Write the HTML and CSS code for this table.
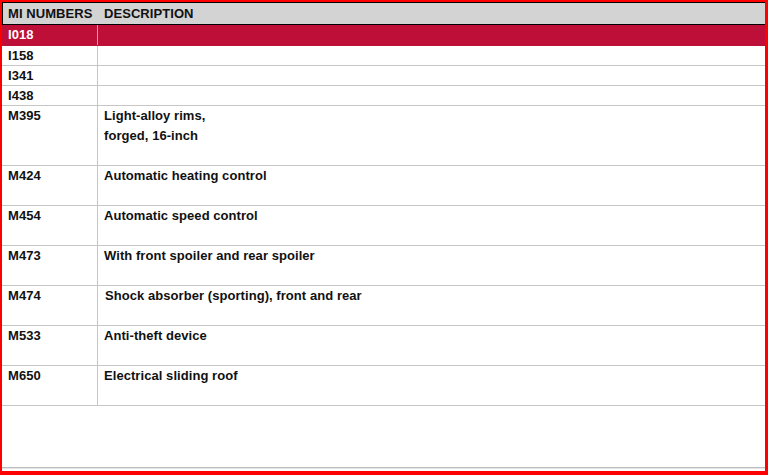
FILE: index.html
```html
<!DOCTYPE html>
<html>
<head>
<meta charset="utf-8">
<link rel="stylesheet" href="styles.css">
</head>
<body>
<div class="frame">
  <div class="head">
    <div class="hcell code">MI NUMBERS</div>
    <div class="hcell desc">DESCRIPTION</div>
  </div>
  <div class="rows">
    <div class="row h21 selected"><div class="cell code">I018</div><div class="cell desc"></div></div>
    <div class="row h20"><div class="cell code">I158</div><div class="cell desc"></div></div>
    <div class="row h20"><div class="cell code">I341</div><div class="cell desc"></div></div>
    <div class="row h20"><div class="cell code">I438</div><div class="cell desc"></div></div>
    <div class="row h60"><div class="cell code">M395</div><div class="cell desc">Light-alloy rims,<br>forged, 16-inch</div></div>
    <div class="row h40"><div class="cell code">M424</div><div class="cell desc">Automatic heating control</div></div>
    <div class="row h40"><div class="cell code">M454</div><div class="cell desc">Automatic speed control</div></div>
    <div class="row h40"><div class="cell code">M473</div><div class="cell desc">With front spoiler and rear spoiler</div></div>
    <div class="row h40"><div class="cell code">M474</div><div class="cell desc shift">Shock absorber (sporting), front and rear</div></div>
    <div class="row h40"><div class="cell code">M533</div><div class="cell desc">Anti-theft device</div></div>
    <div class="row h40"><div class="cell code">M650</div><div class="cell desc">Electrical sliding roof</div></div>
  </div>
  <div class="filler"></div>
</div>
</body>
</html>
```

FILE: styles.css
```css
html, body {
  margin: 0;
  padding: 0;
  background: #ffffff;
}
.frame {
  width: 768px;
  height: 475px;
  box-sizing: border-box;
  border-style: solid;
  border-color: #ff0000;
  border-width: 2px 3px 4px 2px;
  display: flex;
  flex-direction: column;
  font-family: "Liberation Sans", Arial, sans-serif;
  font-weight: bold;
  font-size: 13px;
  letter-spacing: 0.06px;
  color: #111111;
  padding-bottom: 3px;
}
.head {
  display: grid;
  grid-template-columns: 95px 1fr;
  height: 23px;
  box-sizing: border-box;
  border: 1px solid #000000;
  border-right: none;
  background: #d3d3d3;
  line-height: 21px;
}
.hcell.code { padding-left: 5px; }
.hcell.desc { padding-left: 6px; }
.rows {
  display: flex;
  flex-direction: column;
}
.row {
  display: grid;
  grid-template-columns: 96px 1fr;
  box-sizing: border-box;
  border-bottom: 1px solid #c6c6c6;
  line-height: 20px;
}
.h20 { height: 20px; }
.h21 { height: 21px; }
.h40 { height: 40px; }
.h60 { height: 60px; }
.cell.code {
  padding-left: 6px;
  border-right: 1px solid #c6c6c6;
}
.cell.desc { padding-left: 6px; }
.cell.desc.shift { padding-left: 7px; }
.selected {
  background: #bd0f37;
  color: #ffffff;
  border-bottom-color: #bd0f37;
}
.selected .cell.code { border-right-color: #d8a0ad; }
.filler {
  flex: 1;
  border-bottom: 1px solid #bdbdbd;
  box-shadow: 0 1px 0 #e4e4e4;
}
```
